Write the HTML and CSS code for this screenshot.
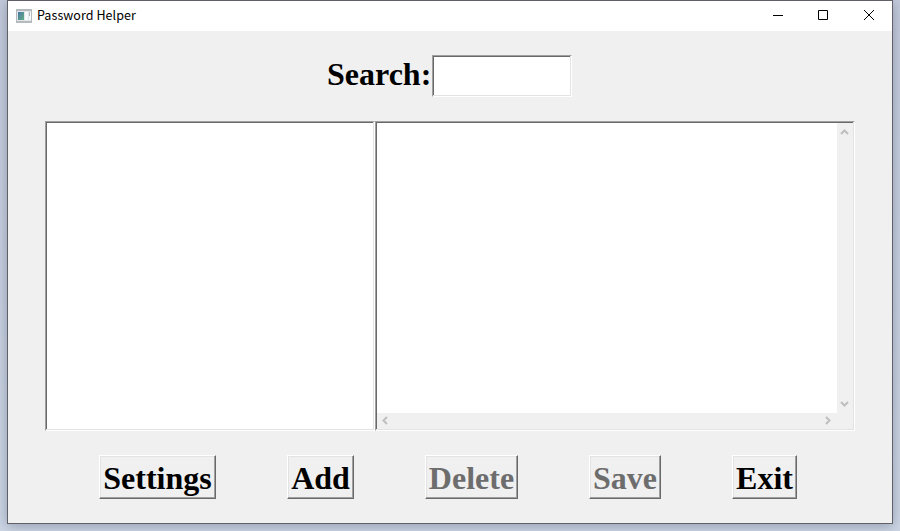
FILE: index.html
```html
<!DOCTYPE html>
<html lang="en">
<head>
<meta charset="utf-8">
<title>Password Helper</title>
<link rel="stylesheet" href="styles.css">
</head>
<body>
<main class="window">
  <header class="titlebar">
    <svg class="app-icon" width="16" height="14" viewBox="0 0 16 14" shape-rendering="crispEdges">
      <defs><linearGradient id="pane" x1="0" y1="0" x2="1" y2="1"><stop offset="0" stop-color="#4a78a8"/><stop offset="1" stop-color="#62ad82"/></linearGradient></defs>
      <path fill="#b4babd" d="M0 0h16v14H0z"/>
      <path fill="#e3e6e8" d="M1 2h14v10H1z"/>
      <path fill="url(#pane)" d="M2 3h6v8H2z"/>
      <path fill="#f8f9fa" d="M9 3h3v8H9zM13 3h2v8h-2z"/>
      <path fill="#b3bec4" d="M13 3h1v4h-1z"/>
    </svg>
    <h1 class="title">Password Helper</h1>
    <div class="controls">
      <svg width="45" height="29" viewBox="0 0 45 29"><path d="M17 14.5h10"/></svg>
      <svg width="45" height="29" viewBox="0 0 45 29"><path d="M17.5 9.5h9v9h-9z"/></svg>
      <svg width="45" height="29" viewBox="0 0 45 29"><path d="M18 9l10 10M28 9L18 19"/></svg>
    </div>
  </header>
  <div class="search">
    <label for="query">Search:</label>
    <input class="sunken" id="query" type="text">
  </div>
  <div class="panes">
    <div class="sunken list"></div>
    <div class="sunken editor">
      <div class="page"></div>
      <div class="bar vertical">
        <svg width="16" height="17" viewBox="0 0 16 17"><path d="M4 11l3.5-3.5L11 11"/></svg>
        <svg width="16" height="17" viewBox="0 0 16 17"><path d="M4 6l3.5 3.5L11 6"/></svg>
      </div>
      <div class="bar horizontal">
        <svg width="17" height="16" viewBox="0 0 17 16"><path d="M10 4L6.5 7.5 10 11"/></svg>
        <svg width="17" height="16" viewBox="0 0 17 16"><path d="M6 4l3.5 3.5L6 11"/></svg>
      </div>
      <div class="corner"></div>
    </div>
  </div>
  <div class="actions">
    <button class="settings">Settings</button>
    <button class="add">Add</button>
    <button class="delete" disabled>Delete</button>
    <button class="save" disabled>Save</button>
    <button class="exit">Exit</button>
  </div>
</main>
</body>
</html>
```
FILE: styles.css
```css
* { box-sizing: border-box; }

body {
  margin: 0;
  height: 531px;
  padding: 0 7px;
  overflow: hidden;
  background: linear-gradient(#c3cbdc, #ccd6e5);
}

.window {
  width: 886px;
  height: 524px;
  border: 1px solid #5f6068;
  background: #f0f0f0;
  box-shadow: 0 2px 12px rgba(40, 50, 70, .35);
}

.titlebar {
  display: flex;
  align-items: center;
  height: 30px;
  padding: 0 0 1px 8px;
  background: #fff;
}

.app-icon { display: block; }

.title {
  flex: 1;
  margin: 0 0 1px 5px;
  font: 400 12.5px/18px "Noto Sans CJK SC", "Noto Sans", sans-serif;
  letter-spacing: .06px;
  color: #000;
}

.controls { display: flex; padding-right: 1px; }
.controls svg { display: block; fill: none; stroke: #000; stroke-width: 1; }

.search {
  display: flex;
  height: 42px;
  margin: 24px 0 0 319px;
  font: bold 32px/38px "Liberation Serif", serif;
}

.search label { width: 105px; }
.search input { width: 140px; height: 42px; outline: none; }

.sunken {
  padding: 1px;
  border: 1px solid;
  border-color: #a0a0a0 #fff #fff #a0a0a0;
  border-radius: 0;
  background: #fff;
  box-shadow: inset -1px -1px #e3e3e3, inset 1px 1px #696969;
}

.panes { display: flex; height: 310px; margin: 24px 37px 0; }
.list { width: 330px; }

.editor {
  display: grid;
  grid-template: 1fr 16px / 1fr 16px;
  width: 480px;
}

.bar { display: flex; justify-content: space-between; background: #f0f0f0; }
.vertical { flex-direction: column; }
.bar svg { display: block; fill: none; stroke: #bfbfbf; stroke-width: 2; }
.corner { background: #f0f0f0; }

.actions { display: flex; gap: 71px; margin: 24px 0 0 91px; }

button {
  height: 44px;
  padding: 2px 0 0;
  border: 1px solid;
  border-color: #fff #696969 #696969 #fff;
  border-radius: 0;
  background: #f0f0f0;
  box-shadow: inset -1px -1px #a0a0a0, inset 1px 1px #e3e3e3;
  font: bold 32px/40px "Liberation Serif", serif;
  color: #000;
}

button:disabled { color: #6d6d6d; }

.settings { width: 117px; }
.add { width: 67px; }
.delete { width: 93px; }
.save { width: 72px; }
.exit { width: 65px; }
```
